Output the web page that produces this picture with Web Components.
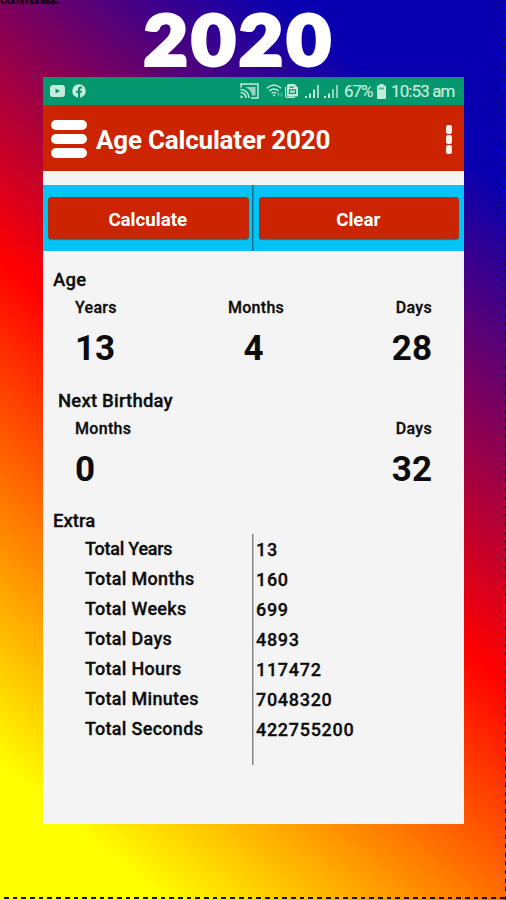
<!DOCTYPE html>
<html lang="en">
<head>
<meta charset="utf-8">
<title>Age Calculater 2020</title>
<style>
  html, body { margin: 0; height: 100%; }
  body { font-family: Roboto, "Liberation Sans", sans-serif; color: #0c0c0c; overflow: hidden; }
</style>
</head>
<body>
<promo-poster>
  <span slot="corner">Communauc</span>
  <span slot="title">2020</span>
  <phone-screen>
    <status-bar>
      <span slot="battery">67%</span>
      <span slot="time">10:53 am</span>
    </status-bar>
    <app-bar>Age Calculater 2020</app-bar>
    <action-bar>
      <action-button>Calculate</action-button>
      <action-button>Clear</action-button>
    </action-bar>
    <result-section heading="Age">
      <result-value label="Years" value="13"></result-value>
      <result-value label="Months" value="4" style="--label-shift: 5px"></result-value>
      <result-value label="Days" value="28"></result-value>
    </result-section>
    <result-section heading="Next Birthday" style="--indent: 15px">
      <result-value label="Months" value="0"></result-value>
      <result-value label="Days" value="32"></result-value>
    </result-section>
    <extra-totals heading="Extra">
      <total-row label="Total Years" value="13" style="--label-spacing: -.25px"></total-row>
      <total-row label="Total Months" value="160"></total-row>
      <total-row label="Total Weeks" value="699"></total-row>
      <total-row label="Total Days" value="4893"></total-row>
      <total-row label="Total Hours" value="117472"></total-row>
      <total-row label="Total Minutes" value="7048320"></total-row>
      <total-row label="Total Seconds" value="422755200"></total-row>
    </extra-totals>
  </phone-screen>
</promo-poster>

<script>
function define(name, html) {
  customElements.define(name, class extends HTMLElement {
    constructor() {
      super();
      const root = this.attachShadow({ mode: "open" });
      root.innerHTML = html;
      // fill [data-attr] nodes from the host's attributes
      root.querySelectorAll("[data-attr]").forEach((el) => {
        el.textContent = this.getAttribute(el.dataset.attr) || "";
      });
    }
  });
}

define("promo-poster", `
  <style>
    :host {
      display: block; position: relative; box-sizing: border-box;
      width: 506px; height: 900px; overflow: hidden;
      background: linear-gradient(219.8deg, #0800b0 14.5%, #ff0000 51.5%, #ffff00 90%);
    }
    .corner {
      position: absolute; left: 0; top: -7px;
      font: 700 12px/14px Roboto, sans-serif; letter-spacing: -1.2px; color: #14000c;
    }
    .title {
      display: flex; height: 77px; box-sizing: border-box; padding-left: 144px;
      font: 900 68px/77px Lato, sans-serif; letter-spacing: 3.9px; color: #fff;
      -webkit-text-stroke: 4px #fff; white-space: nowrap;
    }
    .title span { height: 77px; transform: scaleX(1.1); transform-origin: 0 0; }
    .dash-b, .dash-r { position: absolute; right: 0; bottom: 0; }
    .dash-b { left: 0; bottom: 1px; height: 2px; background: repeating-linear-gradient(90deg, transparent 0 4px, #111 4px 8.7px); }
    .dash-r { top: 0; width: 1px; background: repeating-linear-gradient(#111 0 4px, transparent 4px 8.7px); }
  </style>
  <div class="corner"><slot name="corner"></slot></div>
  <div class="title"><span><slot name="title"></slot></span></div>
  <slot></slot>
  <div class="dash-b"></div>
  <div class="dash-r"></div>
`);

define("phone-screen", `
  <style>
    :host {
      display: flex; flex-direction: column; box-sizing: border-box;
      width: 421px; height: 747px; margin-left: 43px; background: #f4f4f4;
    }
  </style>
  <slot></slot>
`);

define("status-bar", `
  <style>
    :host {
      display: flex; align-items: center; box-sizing: border-box; height: 28px; flex: none;
      padding: 0 9px 0 7px; background: #04966c; color: #c4ecdc; font-size: 17px;
    }
    svg { display: block; flex: none; }
    .gap { flex: 1; }
    .battery { margin-left: 5px; width: 28px; letter-spacing: -1px; white-space: nowrap; }
    .time { margin-left: 5px; width: 64px; letter-spacing: -.9px; white-space: nowrap; }
    .battery, .time { -webkit-text-stroke: .2px; }
  </style>
  <svg width="15" height="12" viewBox="0 0 15 12"><rect width="15" height="12" rx="3" fill="#c4ecdc"/><path d="M5.5 3.4v5.2L10 6z" fill="#04966c"/></svg>
  <svg width="14" height="14" viewBox="0 0 14 14" style="margin-left:7px"><circle cx="7" cy="7" r="6.8" fill="#c4ecdc"/><path d="M6 14V8.8H4.200V6.700H6V5.200C6 3.500 7 2.600 8.500 2.600h1.400v1.900H9c-.7 0-.9.4-.9 1v1.200h1.800l-.3 2.100H8.100V14z" fill="#04966c"/></svg>
  <span class="gap"></span>
  <svg width="19" height="16" viewBox="0 0 19 16" fill="none" stroke="#c4ecdc" stroke-width="1.500"><path d="M1 4.500V1h17v14h-7"/><path d="M8 4h7.500v8.500H12C11.500 8 9 5.500 5 4.500z" fill="#c4ecdc" stroke="none" opacity=".75"/><path d="M.5 6.500a8.500 8.500 0 0 1 8.500 8.500M.5 9.500A5.500 5.500 0 0 1 6 15"/><path d="M.5 12.500A2.500 2.500 0 0 1 3 15H.5z" fill="#c4ecdc" stroke="none"/></svg>
  <svg width="18" height="16" viewBox="0 0 18 16" fill="none" stroke="#c4ecdc" stroke-width="1.400" style="margin-left:7px"><path d="M.8 5.300q7.200-6.600 14.400 0M3.300 8q4.700-4 9.400 0M5.600 10.300q2.400-1.800 4.800 0"/><path d="M6.300 11.500h3.400L8 13.600z" fill="#c4ecdc" stroke="none"/><path d="M12.500 9.500v4M15.500 9.500v4" opacity=".45"/></svg>
  <svg width="13" height="14" viewBox="0 0 13 14" style="margin-left:1px"><path d="M3.500 0h6L13 3.500V11q0 1.500-1.500 1.500h-8Q2 12.500 2 11V1.500Q2 0 3.500 0z" fill="#c4ecdc"/><path d="M.6 3v9q0 1.400 1.400 1.400h8" fill="none" stroke="#c4ecdc" stroke-width="1.200"/><path d="M4.500 3.200h4M4.500 5.800h6v3.500h-6z" fill="none" stroke="#04966c" stroke-width="1.200"/></svg>
  <svg width="15" height="14" viewBox="0 0 15 14" fill="#c4ecdc" style="margin-left:7px"><path d="M0 12h2v2H0zM4 9.500h2V14H4zM8 5.500h2V14H8z"/><path d="M12 1h2v13h-2z" opacity=".8"/></svg>
  <svg width="15" height="14" viewBox="0 0 15 14" fill="#c4ecdc" style="margin-left:4px"><path d="M0 12h2v2H0zM4 9.500h2V14H4z"/><path d="M8 5h2v9H8zM12 1h2v13h-2z" opacity=".7"/></svg>
  <span class="battery"><slot name="battery"></slot></span>
  <svg width="9" height="15" viewBox="0 0 9 15" fill="#c4ecdc" style="margin-left:5px"><path d="M2.500 0h4v1.500H8q1 0 1 1V14q0 1-1 1H1q-1 0-1-1V2.500q0-1 1-1h1.500z"/><path d="M2 3.500h5v2H2z" fill="#04966c" opacity=".6"/></svg>
  <span class="time"><slot name="time"></slot></span>
`);

define("app-bar", `
  <style>
    :host {
      display: flex; align-items: center; box-sizing: border-box; height: 66px; flex: none;
      padding: 2px 12px 0 8px; background: #cc2400; color: #fff;
    }
    .menu { display: grid; gap: 4.500px; width: 36px; }
    .menu i { height: 9.500px; border-radius: 5px; background: #fff; }
    .label { flex: 1; margin-left: 9px; padding-top: 1px; font-weight: 700; font-size: 26px; letter-spacing: -.2px; white-space: nowrap; }
    .more { display: grid; gap: 1px; width: 6px; }
    .more i { height: 9px; border-radius: 2px; background: #f7eeea; }
  </style>
  <div class="menu"><i></i><i></i><i></i></div>
  <div class="label"><slot></slot></div>
  <div class="more"><i></i><i></i><i></i></div>
`);

define("action-bar", `
  <style>
    :host {
      display: grid; grid-template-columns: 1fr 1fr; flex: none; box-sizing: border-box;
      height: 66px; margin-top: 14px; padding: 12px 5px 12px; column-gap: 10px;
      background: linear-gradient(#0b6f92, #0b6f92) 209px 0 / 1.500px 100% no-repeat #04c4f4;
    }
  </style>
  <slot></slot>
`);

define("action-button", `
  <style>
    :host {
      display: flex; align-items: center; justify-content: center; height: 42px;
      box-sizing: border-box; padding: 3px 1px 0 0; border-radius: 3px; background: #cc2400; color: #fff;
      border: 1px solid #a8321c; box-shadow: 0 1px 1px rgba(0, 60, 90, .5);
      font-weight: 700; font-size: 18.700px;
    }
  </style>
  <slot></slot>
`);

define("result-section", `
  <style>
    :host { display: block; box-sizing: border-box; height: 120.500px; padding-top: 17px; flex: none; }
    h2 {
      margin: 0; padding-left: var(--indent, 10px); font-size: 18.500px; font-weight: 500;
      line-height: 24px; letter-spacing: .2px; -webkit-text-stroke: .3px;
    }
    .values { display: flex; justify-content: space-between; padding: 5px 32px 0; }
  </style>
  <h2 data-attr="heading"></h2>
  <div class="values"><slot></slot></div>
`);

define("result-value", `
  <style>
    :host { display: block; width: 62px; text-align: center; }
    :host(:first-child) { text-align: left; }
    :host(:last-child) { text-align: right; }
    .label {
      padding-left: var(--label-shift, 0); font-size: 16px; font-weight: 500; line-height: 22px;
      letter-spacing: .3px; -webkit-text-stroke: .3px;
    }
    .value { margin-top: 10px; font-size: 35px; font-weight: 700; line-height: 40px; }
  </style>
  <div class="label" data-attr="label"></div>
  <div class="value" data-attr="value"></div>
`);

define("extra-totals", `
  <style>
    :host { display: block; box-sizing: border-box; padding-top: 16px; }
    h2 { margin: 0; padding-left: 10px; font-size: 18.500px; font-weight: 500; line-height: 26px; -webkit-text-stroke: .3px; }
    .rows {
      box-sizing: border-box; height: 231px;
      background: linear-gradient(#858585, #858585) 209px 0 / 1.500px 100% no-repeat;
    }
  </style>
  <h2 data-attr="heading"></h2>
  <div class="rows"><slot></slot></div>
`);

define("total-row", `
  <style>
    :host {
      display: grid; grid-template-columns: 171px 1fr; height: 30px; padding-left: 42px;
      font-size: 18px; font-weight: 500; line-height: 29px; letter-spacing: var(--label-spacing, .3px);
      -webkit-text-stroke: .3px;
    }
    .value { padding-top: 1px; letter-spacing: .7px; }
  </style>
  <span data-attr="label"></span>
  <span class="value" data-attr="value"></span>
`);
</script>
</body>
</html>
